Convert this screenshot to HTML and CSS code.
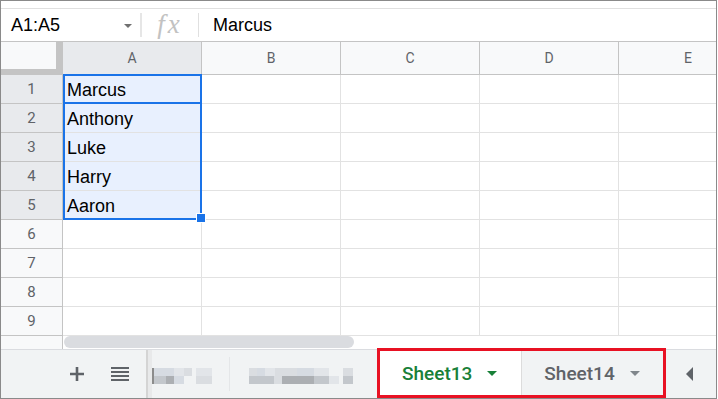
FILE: index.html
```html
<!DOCTYPE html>
<html lang="en">
<head>
  <meta charset="UTF-8">
  <meta name="viewport" content="width=device-width, initial-scale=1.0">
  <title>Sheets - tabs</title>
  <link rel="stylesheet" href="styles.css">
</head>
<body>
  <div class="window">
    <div class="top-strip"></div>

    <div class="formula-bar">
      <div class="name-box">
        <span>A1:A5</span>
        <span class="caret"></span>
      </div>
      <div class="bar-divider wide"></div>
      <div class="fx">fx</div>
      <div class="bar-divider"></div>
      <div class="formula-value">Marcus</div>
    </div>

    <div class="sheet">
      <div class="corner"></div>
      <div class="ch active">A</div>
      <div class="ch">B</div>
      <div class="ch">C</div>
      <div class="ch">D</div>
      <div class="ch">E</div>

      <div class="rh active">1</div>
      <div class="cell sel">Marcus</div>
      <div class="cell"></div><div class="cell"></div><div class="cell"></div><div class="cell"></div>

      <div class="rh active">2</div>
      <div class="cell sel">Anthony</div>
      <div class="cell"></div><div class="cell"></div><div class="cell"></div><div class="cell"></div>

      <div class="rh active">3</div>
      <div class="cell sel">Luke</div>
      <div class="cell"></div><div class="cell"></div><div class="cell"></div><div class="cell"></div>

      <div class="rh active">4</div>
      <div class="cell sel">Harry</div>
      <div class="cell"></div><div class="cell"></div><div class="cell"></div><div class="cell"></div>

      <div class="rh active">5</div>
      <div class="cell sel">Aaron</div>
      <div class="cell"></div><div class="cell"></div><div class="cell"></div><div class="cell"></div>

      <div class="rh">6</div>
      <div class="cell"></div><div class="cell"></div><div class="cell"></div><div class="cell"></div><div class="cell"></div>

      <div class="rh">7</div>
      <div class="cell"></div><div class="cell"></div><div class="cell"></div><div class="cell"></div><div class="cell"></div>

      <div class="rh">8</div>
      <div class="cell"></div><div class="cell"></div><div class="cell"></div><div class="cell"></div><div class="cell"></div>

      <div class="rh">9</div>
      <div class="cell"></div><div class="cell"></div><div class="cell"></div><div class="cell"></div><div class="cell"></div>

      <!-- selection overlay -->
      <div class="range"></div>
      <div class="active-cell"></div>
      <div class="fill-handle"></div>
    </div>

    <div class="hscroll">
      <div class="hscroll-gutter"></div>
      <div class="hscroll-track">
        <div class="hscroll-thumb"></div>
      </div>
    </div>

    <div class="tab-bar">
      <div class="tb-btn">
        <svg width="14" height="14" viewBox="0 0 14 14">
          <path d="M7 0v14M0 7h14" stroke="#5f6368" stroke-width="2.6" fill="none"/>
        </svg>
      </div>
      <div class="tb-btn menu">
        <svg width="18" height="16" viewBox="0 0 18 16">
          <rect x="0" y="1" width="18" height="2" fill="#5f6368"/>
          <rect x="0" y="5" width="18" height="2" fill="#5f6368"/>
          <rect x="0" y="9" width="18" height="2" fill="#5f6368"/>
          <rect x="0" y="13" width="18" height="2" fill="#5f6368"/>
        </svg>
      </div>
      <div class="tab-sep"></div>

      <!-- hidden (blurred) sheet names -->
      <div class="blur-tab first">
        <div class="pix-row">
          <span class="px dark" style="width:2px"></span>
          <span class="px c1" style="width:20px"></span>
          <span class="px c2" style="width:10px"></span>
          <span class="px c3" style="width:8px"></span>
          <span class="px bg" style="width:4px"></span>
          <span class="px c2" style="width:16px"></span>
        </div>
        <div class="pix-row">
          <span class="px dark" style="width:2px"></span>
          <span class="px c4" style="width:12px"></span>
          <span class="px c5" style="width:8px"></span>
          <span class="px c1" style="width:10px"></span>
          <span class="px bg" style="width:12px"></span>
          <span class="px c3" style="width:16px"></span>
        </div>
      </div>
      <div class="faint-sep"></div>
      <div class="blur-tab second">
        <div class="pix-row">
          <span class="px c3" style="width:8px"></span>
          <span class="px c1" style="width:8px"></span>
          <span class="px c2" style="width:10px"></span>
          <span class="px c3" style="width:22px"></span>
          <span class="px c1" style="width:17px"></span>
          <span class="px c2" style="width:15px"></span>
          <span class="px bg" style="width:14px"></span>
          <span class="px c3" style="width:10px"></span>
        </div>
        <div class="pix-row">
          <span class="px c4" style="width:25px"></span>
          <span class="px c3" style="width:8px"></span>
          <span class="px c5" style="width:32px"></span>
          <span class="px c4" style="width:15px"></span>
          <span class="px c2" style="width:10px"></span>
          <span class="px bg" style="width:4px"></span>
          <span class="px c4" style="width:10px"></span>
        </div>
      </div>

      <div class="highlight">
        <div class="sheet-tab current">
          <span>Sheet13</span>
          <span class="tab-caret"></span>
        </div>
        <div class="sheet-tab">
          <span>Sheet14</span>
          <span class="tab-caret"></span>
        </div>
      </div>

      <div class="scroll-left"></div>
    </div>
  </div>
</body>
</html>
```

FILE: styles.css
```css
* {
  box-sizing: border-box;
}
body {
  margin: 0;
  background: #fff;
  font-family: 'Liberation Sans', Arial, sans-serif;
}
.window {
  width: 717px;
  height: 399px;
  border: 1px solid #8a8a8a;
  display: flex;
  flex-direction: column;
  overflow: hidden;
  background: #fff;
}
.top-strip {
  height: 8px;
  border-bottom: 1px solid #e0e0e0;
}

/* formula bar */
.formula-bar {
  height: 33px;
  display: flex;
  align-items: center;
  border-bottom: 1px solid #c4c4c4;
  font-size: 18px;
  color: #000;
}
.name-box {
  width: 139px;
  display: flex;
  align-items: center;
  justify-content: space-between;
  padding: 0 8px 0 10px;
}
.caret {
  width: 0;
  height: 0;
  border-left: 4px solid transparent;
  border-right: 4px solid transparent;
  border-top: 4px solid #707070;
  margin-top: 2px;
}
.bar-divider {
  width: 1px;
  height: 24px;
  background: #e0e0e0;
}
.bar-divider.wide {
  width: 2px;
  background: #e6e6e6;
}
.fx {
  width: 56px;
  text-align: center;
  font-family: 'Liberation Serif', serif;
  font-style: italic;
  font-size: 27px;
  letter-spacing: 3px;
  color: #c2c2c2;
  line-height: 1;
  margin-top: -2px;
}
.formula-value {
  padding-left: 14px;
}

/* grid */
.sheet {
  position: relative;
  display: grid;
  grid-template-columns: 62px repeat(5, 139px);
  grid-template-rows: 33px repeat(9, 29px);
}
.corner {
  background: #f8f9fa;
  border-right: 7px solid #c4c4c4;
  border-bottom: 6px solid #c4c4c4;
}
.ch {
  background: #f8f9fa;
  border-right: 1px solid #c4c4c4;
  border-bottom: 1px solid #c4c4c4;
  font-family: Roboto, sans-serif;
  font-size: 14px;
  color: #5f6368;
  display: flex;
  align-items: center;
  justify-content: center;
}
.rh {
  background: #f8f9fa;
  border-right: 1px solid #c4c4c4;
  border-bottom: 1px solid #c4c4c4;
  font-family: Roboto, sans-serif;
  font-size: 15px;
  color: #5f6368;
  display: flex;
  align-items: center;
  justify-content: center;
}
.ch.active,
.rh.active {
  background: #e8eaed;
}
.cell {
  border-right: 1px solid #e2e2e2;
  border-bottom: 1px solid #e2e2e2;
  font-size: 18px;
  line-height: 30px;
  padding-left: 4px;
  color: #000;
  white-space: nowrap;
}
.cell.sel {
  background: #e8f0fe;
}
.range {
  position: absolute;
  left: 62px;
  top: 32px;
  width: 139px;
  height: 146px;
  border: 2px solid #1a73e8;
}
.active-cell {
  position: absolute;
  left: 62px;
  top: 32px;
  width: 139px;
  height: 30px;
  border: 2px solid #1a73e8;
}
.fill-handle {
  position: absolute;
  left: 195px;
  top: 171px;
  width: 10px;
  height: 10px;
  background: #1a73e8;
  border: 1px solid #fff;
}

/* horizontal scrollbar */
.hscroll {
  height: 13px;
  display: flex;
}
.hscroll-gutter {
  width: 62px;
  background: #f8f9fa;
  border-right: 1px solid #c4c4c4;
}
.hscroll-track {
  flex: 1;
  padding: 0 0 0 1px;
}
.hscroll-thumb {
  width: 290px;
  height: 12px;
  border-radius: 6px;
  background: #dadce0;
}

/* sheet tabs */
.tab-bar {
  flex: 1;
  display: flex;
  align-items: center;
  background: #f1f3f4;
  border-top: 1px solid #dadce0;
  padding-left: 55px;
}
.tb-btn {
  width: 41px;
  height: 100%;
  display: flex;
  align-items: center;
  justify-content: center;
}
.tb-btn.menu {
  margin-left: 2px;
}
.tab-sep {
  align-self: stretch;
  width: 6px;
  margin-left: 6px;
  border-left: 2px solid #d4d4d4;
  background: #e8e9ea;
}
.blur-tab {
  display: flex;
  flex-direction: column;
  margin-top: 4px;
}
.blur-tab.first {
  width: 60px;
}
.blur-tab.second {
  width: 111px;
}
.pix-row {
  display: flex;
  height: 8px;
}
.px {
  height: 8px;
}
.px.dark { background: #8c8c8c; }
.px.c1 { background: #d6dbe2; }
.px.c2 { background: #e2e5e9; }
.px.c3 { background: #dadde1; }
.px.c4 { background: #c3c7cc; }
.px.c5 { background: #acafb3; }
.px.bg { background: #f1f3f4; }
.faint-sep {
  width: 1px;
  height: 34px;
  margin: 0 19px 0 17px;
  background: #e4e6e8;
}
.highlight {
  align-self: flex-start;
  margin-top: -2px;
  margin-left: 17px;
  height: 50px;
  border: 3px solid #e81123;
  display: flex;
}
.sheet-tab {
  display: flex;
  align-items: center;
  padding: 0 23px 0 22px;
  font-family: Roboto, sans-serif;
  font-weight: 500;
  font-size: 19px;
  color: #5f6368;
  background: #f1f3f4;
  border-left: 1px solid #dcdcdc;
}
.sheet-tab.current {
  background: #fff;
  color: #188038;
  border-left: none;
  padding-right: 24px;
}
.tab-caret {
  width: 0;
  height: 0;
  margin-left: 15px;
  border-left: 5px solid transparent;
  border-right: 5px solid transparent;
  border-top: 5px solid #80868b;
}
.sheet-tab.current .tab-caret {
  border-top-color: #188038;
}
.scroll-left {
  margin-left: 20px;
  width: 0;
  height: 0;
  border-top: 7px solid transparent;
  border-bottom: 7px solid transparent;
  border-right: 7px solid #5f6368;
}
```
